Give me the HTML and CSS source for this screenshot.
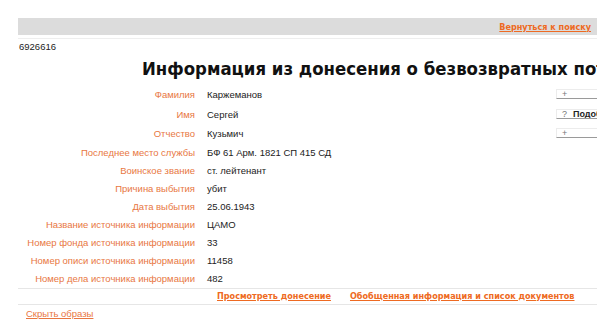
FILE: index.html
```html
<!DOCTYPE html>
<html lang="ru">
<head>
    <meta charset="UTF-8">
    <title>Информация из донесения о безвозвратных потерях</title>
    <link rel="stylesheet" href="styles.css">
</head>
<body>
    <div class="page">
        <div class="topbar">
            <a href="#" class="link-bold">Вернуться к поиску</a>
        </div>
        <div class="rule"></div>

        <div class="doc-id">6926616</div>

        <h1 class="title">Информация из донесения о безвозвратных потерях</h1>

        <div class="info">
            <div class="label">Фамилия</div>
            <div class="value">Каржеманов</div>
            <div class="tool"><span class="btn"><span class="sign">+</span></span></div>

            <div class="label">Имя</div>
            <div class="value">Сергей</div>
            <div class="tool"><span class="btn"><span class="sign">?</span><b>Подобрать</b></span></div>

            <div class="label">Отчество</div>
            <div class="value">Кузьмич</div>
            <div class="tool"><span class="btn"><span class="sign">+</span></span></div>

            <div class="label">Последнее место службы</div>
            <div class="value">БФ 61 Арм. 1821 СП 415 СД</div>
            <div class="tool"></div>

            <div class="label">Воинское звание</div>
            <div class="value">ст. лейтенант</div>
            <div class="tool"></div>

            <div class="label">Причина выбытия</div>
            <div class="value">убит</div>
            <div class="tool"></div>

            <div class="label">Дата выбытия</div>
            <div class="value">25.06.1943</div>
            <div class="tool"></div>

            <div class="label">Название источника информации</div>
            <div class="value">ЦАМО</div>
            <div class="tool"></div>

            <div class="label">Номер фонда источника информации</div>
            <div class="value">33</div>
            <div class="tool"></div>

            <div class="label">Номер описи источника информации</div>
            <div class="value">11458</div>
            <div class="tool"></div>

            <div class="label">Номер дела источника информации</div>
            <div class="value">482</div>
            <div class="tool"></div>
        </div>

        <div class="actions">
            <a href="#" class="link-bold">Просмотреть донесение</a>
            <a href="#" class="link-bold">Обобщенная информация и список документов</a>
        </div>

        <div class="footer">
            <a href="#" class="link-plain">Скрыть образы</a>
        </div>
    </div>
</body>
</html>
```

FILE: styles.css
```css
* {
    margin: 0;
    padding: 0;
    box-sizing: border-box;
}

html, body {
    overflow: hidden;
}

body {
    font-family: "Liberation Sans", Arial, sans-serif;
    font-size: 9.5px;
    color: #222222;
    background: #ffffff;
}

.page {
    width: 800px;
    padding: 18px 0 0 18px;
}

a {
    color: #ee6a22;
}

.link-bold {
    font-family: "DejaVu Sans Condensed", "DejaVu Sans", sans-serif;
    font-weight: bold;
    font-size: 9px;
}

.link-plain {
    font-size: 9.5px;
    color: #e9763f;
}

.topbar {
    height: 17px;
    background: #dcdcdc;
    text-align: right;
    padding: 3px 0 0 0;
    width: 579px;
}

.topbar a {
    margin-right: 6px;
}

.rule {
    height: 1px;
    background: #eeeeee;
    margin-top: 3px;
    width: 579px;
}

.doc-id {
    margin-top: 1px;
    padding-left: 1px;
    line-height: 14px;
}

.title {
    font-family: "DejaVu Sans Condensed", "DejaVu Sans", sans-serif;
    font-size: 18.4px;
    font-weight: bold;
    color: #111111;
    white-space: nowrap;
    padding-left: 124px;
    line-height: 26px;
    margin-top: 2px;
}

.info {
    display: grid;
    grid-template-columns: 189px 349px 100px;
    margin-top: 3px;
}

.label {
    text-align: right;
    padding-right: 12px;
    color: #e8773f;
    line-height: 18px;
    white-space: nowrap;
}

.value {
    line-height: 18px;
    white-space: nowrap;
}

.info > :nth-child(-n+9) {
    line-height: 19.5px;
}

.tool {
    padding-top: 4px;
}

.btn {
    display: block;
    height: 10px;
    border: 1px solid #ececec;
    border-bottom: 1px solid #9a9a9a;
    border-right: 1px solid #cccccc;
    font-size: 9px;
    line-height: 8px;
    padding-left: 5px;
    white-space: nowrap;
    overflow: hidden;
}

.btn .sign {
    color: #777777;
    margin-right: 6px;
}

.btn b {
    color: #222222;
}

.actions {
    border-top: 1px solid #e6e6e6;
    border-bottom: 1px solid #e6e6e6;
    width: 579px;
    padding: 2px 0 2px 199px;
    display: flex;
    gap: 19px;
    line-height: 11px;
}

.footer {
    padding: 2px 0 0 8px;
    line-height: 14px;
}
```
